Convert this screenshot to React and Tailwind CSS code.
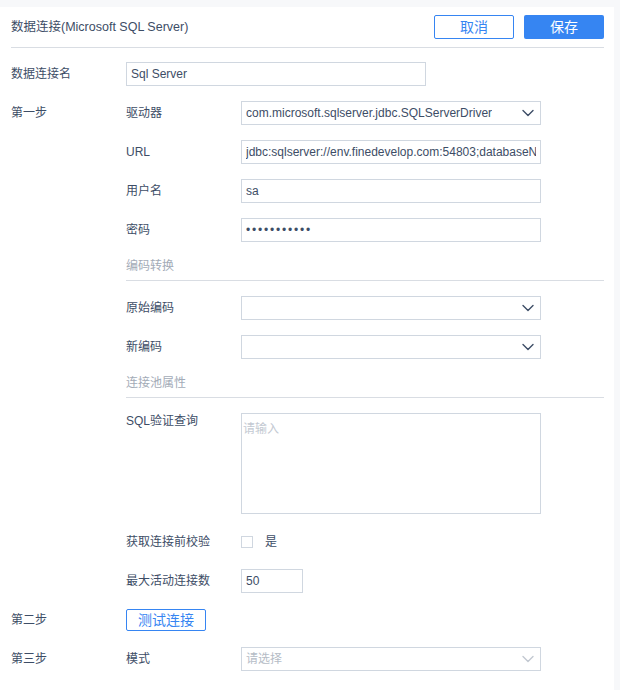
import React from 'react';

const font = { fontFamily: '"Liberation Sans", "Noto Sans CJK SC", sans-serif' };

// Small chevron used in the select boxes
function Chevron({ light }) {
  return (
    <svg width="12" height="8" viewBox="0 0 12 8" fill="none" className="shrink-0">
      <path
        d="M1 1.5 L6 6.5 L11 1.5"
        stroke={light ? '#c2c8d1' : '#3d4d66'}
        strokeWidth="1.4"
        strokeLinecap="round"
        strokeLinejoin="round"
      />
    </svg>
  );
}

function Row({ step, label, children, className = 'mt-[15px]' }) {
  return (
    <div className={`flex items-center h-6 ${className}`}>
      <div className="w-[115px] shrink-0">{step}</div>
      <div className="w-[115px] shrink-0">{label}</div>
      {children}
    </div>
  );
}

function TextBox({ value, type = 'text', width = 'w-[300px]', extra = '' }) {
  return (
    <input
      readOnly
      type={type}
      value={value}
      className={`${width} h-6 border border-[#d0d7e0] px-1 text-xs text-[#3d4d66] outline-none bg-white ${extra}`}
      style={font}
    />
  );
}

function Select({ value, placeholder }) {
  return (
    <div className="w-[300px] h-6 border border-[#d0d7e0] flex items-center justify-between pl-1 pr-[6px]">
      {value ? (
        <span className="truncate">{value}</span>
      ) : (
        <span className="text-[#b5bcc6]">{placeholder}</span>
      )}
      <Chevron light={!!placeholder} />
    </div>
  );
}

function SectionTitle({ children }) {
  return (
    <div className="ml-[115px] mt-4 pb-[6px] border-b border-[#d9dde3] text-[#a3abb7] leading-4">
      {children}
    </div>
  );
}

export default function App() {
  return (
    <div className="w-[620px] h-[690px] bg-[#f7f8fa] pt-[7px] overflow-hidden text-xs text-[#3d4d66]" style={font}>
      <div className="w-[614px] h-full bg-white pl-[11px] pr-[10px]">
        {/* header */}
        <div className="h-[41px] flex items-center justify-between border-b border-[#d9dde3]">
          <div className="text-[12.5px]">数据连接(Microsoft SQL Server)</div>
          <div className="flex gap-[10px]">
            <button className="w-20 h-6 border border-[#3685f2] text-[#3685f2] text-sm bg-white rounded-[2px]">取消</button>
            <button className="w-20 h-6 bg-[#3685f2] text-white text-sm rounded-[2px]">保存</button>
          </div>
        </div>

        <div className="flex items-center h-6 mt-[14px]">
          <div className="w-[115px] shrink-0">数据连接名</div>
          <TextBox value="Sql Server" />
        </div>

        <Row step="第一步" label="驱动器">
          <Select value="com.microsoft.sqlserver.jdbc.SQLServerDriver" />
        </Row>
        <Row label="URL">
          <TextBox value="jdbc:sqlserver://env.finedevelop.com:54803;databaseName=test" />
        </Row>
        <Row label="用户名">
          <TextBox value="sa" />
        </Row>
        <Row label="密码">
          <TextBox type="password" value="12345678901" extra="tracking-[1.8px]" />
        </Row>

        <SectionTitle>编码转换</SectionTitle>
        <Row label="原始编码">
          <Select value=" " />
        </Row>
        <Row label="新编码">
          <Select value=" " />
        </Row>

        <SectionTitle>连接池属性</SectionTitle>
        <div className="flex items-start mt-[15px]">
          <div className="w-[115px] shrink-0" />
          <div className="w-[115px] shrink-0 leading-4">SQL验证查询</div>
          <textarea
            readOnly
            placeholder="请输入"
            className="w-[300px] h-[101px] border border-[#d0d7e0] pl-[1px] pt-[7px] text-xs leading-4 resize-none outline-none placeholder:text-[#c3c9d2]"
            style={font}
          />
        </div>

        <Row label="获取连接前校验" className="mt-4">
          <div className="flex items-center gap-3">
            <span className="w-[12px] h-[12px] border border-[#d0d7e0] bg-white" />
            <span>是</span>
          </div>
        </Row>
        <Row label="最大活动连接数">
          <TextBox value="50" width="w-[62px]" />
        </Row>

        <div className="flex items-center h-[22px] mt-4">
          <div className="w-[115px] shrink-0">第二步</div>
          <button className="w-20 h-[22px] border border-[#3685f2] text-[#3685f2] text-sm bg-white rounded-[2px]">测试连接</button>
        </div>

        <Row step="第三步" label="模式" className="mt-4">
          <Select placeholder="请选择" />
        </Row>
      </div>
    </div>
  );
}
